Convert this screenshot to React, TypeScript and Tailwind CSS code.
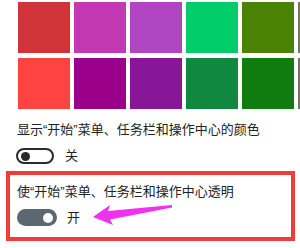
import React from 'react'

const rows = [
  ['#d13438', '#c239b3', '#b146c2', '#00cc6a', '#498205', '#7e735f'],
  ['#ff4343', '#9a0089', '#881798', '#10893e', '#107c10', '#767461'],
]

function Toggle({ on }: { on: boolean }) {
  if (on) {
    return (
      <div className="flex h-[17px] w-[40px] items-center justify-end rounded-full bg-[#5c676f] pr-[4px]">
        <div className="h-[10px] w-[10px] rounded-full bg-white" />
      </div>
    )
  }
  return (
    <div className="flex h-[16px] w-[38px] items-center rounded-full border-2 border-[#2b2b2b] bg-white pl-[3px]">
      <div className="h-[9px] w-[9px] rounded-full bg-[#2b2b2b]" />
    </div>
  )
}

export default function App() {
  return (
    <div
      className="relative h-[248px] w-[300px] overflow-hidden bg-white text-[13px] text-[#222]"
      style={{ fontFamily: '"Liberation Sans", "Noto Sans CJK SC", sans-serif' }}
    >
      {/* colour swatches */}
      <div className="flex flex-col gap-[5px] pl-[18px] pt-[2px]">
        {rows.map((row, i) => (
          <div key={i} className="flex gap-[4px]">
            {row.map((c) => (
              <div key={c} className="h-[51px] w-[52px] shrink-0" style={{ backgroundColor: c }} />
            ))}
          </div>
        ))}
      </div>

      <div className="mt-[12px] pl-[17px] leading-[18px]">显示“开始”菜单、任务栏和操作中心的颜色</div>
      <div className="mt-[9px] flex items-center gap-[11px] pl-[16px] leading-[16px]">
        <Toggle on={false} />
        <span>关</span>
      </div>

      {/* highlighted setting */}
      <div className="mx-[6px] mt-[7px] h-[70px] w-[289px] border-4 border-[#f03c3c] pl-[7px] pt-[8px]">
        <div className="leading-[18px]">使“开始”菜单、任务栏和操作中心透明</div>
        <div className="mt-[7px] flex items-center gap-[10px] pl-[-1px]">
          <Toggle on={true} />
          <span>开</span>
        </div>
      </div>

      {/* arrow */}
      <svg className="pointer-events-none absolute left-0 top-0" width="300" height="248" viewBox="0 0 300 248">
        <polygon
          points="93,217 110,205 108,211 172,205 172,207.5 110,219.5 113,225"
          fill="#f032ef"
        />
      </svg>
    </div>
  )
}
